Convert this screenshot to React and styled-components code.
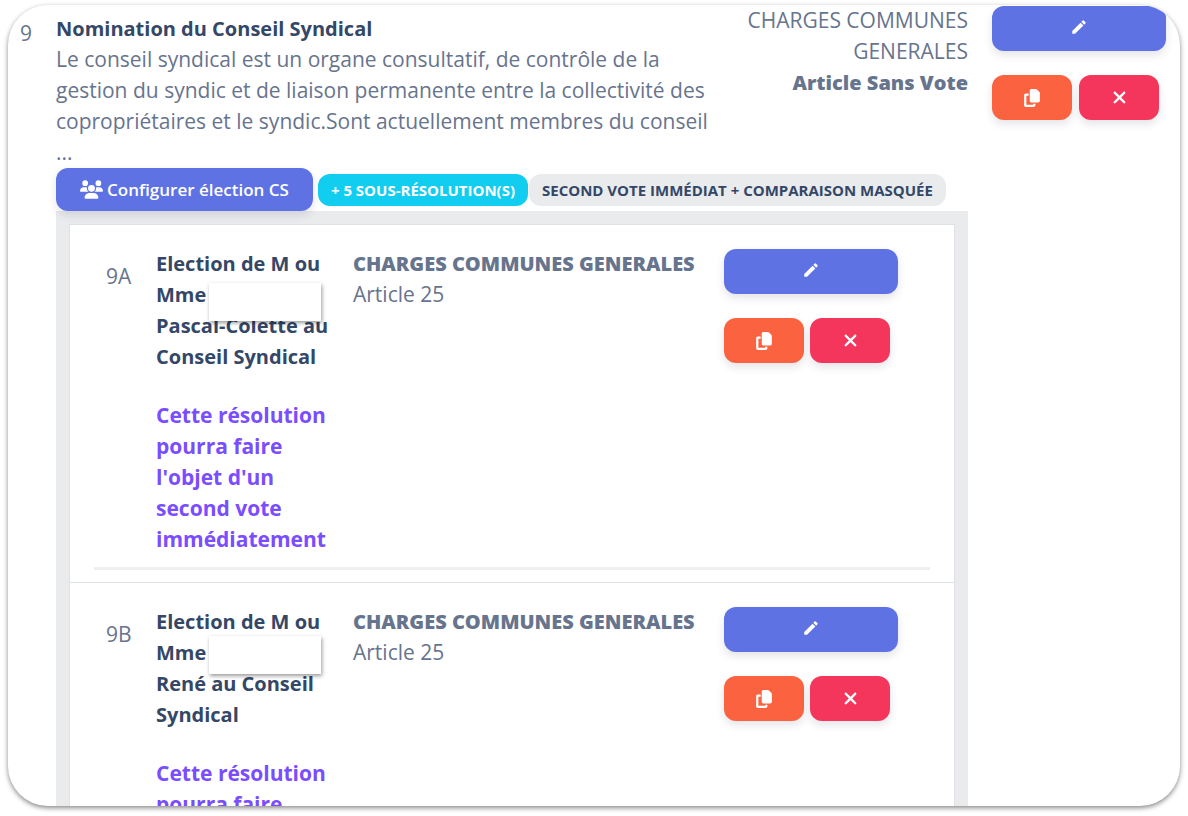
import React from "react";
import styled, { createGlobalStyle } from "styled-components";
import { FaUsers, FaCopy, FaXmark } from "react-icons/fa6";
import { MdEdit } from "react-icons/md";

const GlobalStyle = createGlobalStyle`
  * {
    box-sizing: border-box;
  }
  body {
    margin: 0;
    background: #fff;
    color: #67748e;
    font-family: "Open Sans", "Noto Sans", sans-serif;
    font-size: 21px;
    line-height: 31px;
  }
  h2, h3, p {
    margin: 0;
    font-size: inherit;
  }
`;

const Page = styled.main`
  height: 100vh;
  padding: 5px 8px 10px;
`;

const Sheet = styled.section`
  height: 100%;
  overflow: hidden;
  border-radius: 40px;
  background: #fff;
  box-shadow: 0 2px 5px #0007;
`;

const Resolution = styled.article`
  display: grid;
  grid-template-columns: 12px minmax(0, 1fr) 227px 174px;
  column-gap: 24px;
  padding: 0 14px 0 12px;
`;

const Numero = styled.span`
  padding-top: 13px;
`;

const Summary = styled.div`
  padding-top: 8px;
`;

const Title = styled.h2`
  color: #344767;
  font-size: 20px;
  font-weight: 700;
`;

const Charges = styled.div`
  text-align: right;

  strong {
    font-size: 20px;
    font-weight: 800;
  }
`;

const Actions = styled.div`
  display: grid;
  grid-template-columns: 80px 80px;
  column-gap: ${({ $gap }) => $gap};
  row-gap: 24px;
  align-content: start;
  padding-top: 1px;
`;

const Button = styled.button`
  display: flex;
  align-items: center;
  justify-content: center;
  gap: 4px;
  height: 45px;
  padding: 0 24px;
  border: 0;
  border-radius: 12px;
  background: ${({ $bg }) => $bg};
  color: #fff;
  font: 600 17px "Open Sans", sans-serif;
  box-shadow: 0 4px 8px #32325d22;
  cursor: pointer;
`;

const EditButton = styled(Button)`
  grid-column: 1 / -1;
  width: 174px;
  padding-bottom: 4px;
`;

const ConfigButton = styled(Button)`
  height: 43px;
`;

const Details = styled.div`
  grid-column: 2 / 4;
`;

const Toolbar = styled.div`
  display: flex;
  align-items: center;
  gap: 5px;
`;

const Badges = styled.div`
  display: flex;
  gap: 1px;
`;

const Badge = styled.span`
  height: 32px;
  padding: 0 13px;
  border-radius: 12px;
  background: ${({ $bg }) => $bg};
  color: ${({ $color }) => $color};
  font-size: 15px;
  font-weight: 700;
  line-height: 32px;
  text-transform: uppercase;
  white-space: nowrap;
`;

const SubList = styled.div`
  padding: 13px 13px 13px 13px;
  background: #e9ebed;
`;

const SubResolution = styled.article`
  padding: 23px 24px 12px;
  border: 1px solid #dfe1e4;
  border-top-width: ${({ $first }) => ($first ? "1px" : "0")};
  background: #fff;
`;

const SubRow = styled.div`
  display: grid;
  grid-template-columns: 26px 173px minmax(0, 1fr) 206px;
  column-gap: 24px;
  padding: 0 0 12px 12px;
`;

const SubTitle = styled.h3`
  color: #344767;
  font-size: 20px;
  font-weight: 700;
`;

const NameMask = styled.span`
  position: absolute;
  left: 53px;
  top: ${({ $top }) => $top};
  width: 112px;
  height: 38px;
  background: #fff;
  box-shadow: 1px 2px 4px #0006;
`;

const SubText = styled.div`
  position: relative;
`;

const Notice = styled.p`
  margin-top: 28px;
  color: #7a4dff;
  font-weight: 700;
`;

const SubCharges = styled.div`
  white-space: nowrap;

  strong {
    font-size: 20px;
    font-weight: 800;
  }
`;

const Divider = styled.hr`
  height: 3px;
  margin: 0;
  border: 0;
  background: #efefef;
`;

const items = [
  {
    id: "9A",
    lines: ["Election de M ou", "Mme", "Pascal-Colette au", "Conseil Syndical"],
    mask: "35px",
  },
  {
    id: "9B",
    lines: ["Election de M ou", "Mme", "René au Conseil", "Syndical"],
    mask: "30px",
  },
];

const ActionButtons = ({ gap }) => (
  <Actions $gap={gap}>
    <EditButton $bg="#5e72e4" aria-label="Modifier">
      <MdEdit size={18} />
    </EditButton>
    <Button $bg="#fb6340" aria-label="Copier">
      <FaCopy size={18} />
    </Button>
    <Button $bg="#f5365c" aria-label="Supprimer">
      <FaXmark size={19} />
    </Button>
  </Actions>
);

const SubItem = ({ item, first }) => (
  <SubResolution $first={first}>
    <SubRow>
      <Numero>{item.id}</Numero>
      <SubText>
        <SubTitle>
          {item.lines.map((line) => (
            <div key={line}>{line}</div>
          ))}
        </SubTitle>
        <NameMask $top={item.mask} />
        <Notice>
          Cette résolution pourra faire l'objet d'un second vote immédiatement
        </Notice>
      </SubText>
      <SubCharges>
        <strong>CHARGES COMMUNES GENERALES</strong>
        <div>Article 25</div>
      </SubCharges>
      <ActionButtons gap="6px" />
    </SubRow>
    <Divider />
  </SubResolution>
);

const App = () => {
  return (
    <>
      <GlobalStyle />
      <Page>
        <Sheet>
          <Resolution>
            <Numero>9</Numero>
            <Summary>
              <Title>Nomination du Conseil Syndical</Title>
              <p>
                Le conseil syndical est un organe consultatif, de contrôle de la
                gestion du syndic et de liaison permanente entre la collectivité
                des copropriétaires et le syndic.Sont actuellement membres du
                conseil ...
              </p>
            </Summary>
            <Charges>
              CHARGES COMMUNES GENERALES
              <br />
              <strong>Article Sans Vote</strong>
            </Charges>
            <ActionButtons gap="7px" />
            <Details>
              <Toolbar>
                <ConfigButton $bg="#5e72e4">
                  <FaUsers size={23} />
                  Configurer élection CS
                </ConfigButton>
                <Badges>
                  <Badge $bg="#11cdef" $color="#fff">
                    + 5 sous-résolution(s)
                  </Badge>
                  <Badge $bg="#e9ebed" $color="#344767">
                    Second vote immédiat + comparaison masquée
                  </Badge>
                </Badges>
              </Toolbar>
              <SubList>
                {items.map((item, i) => (
                  <SubItem key={item.id} item={item} first={i === 0} />
                ))}
              </SubList>
            </Details>
          </Resolution>
        </Sheet>
      </Page>
    </>
  );
};

export default App;
